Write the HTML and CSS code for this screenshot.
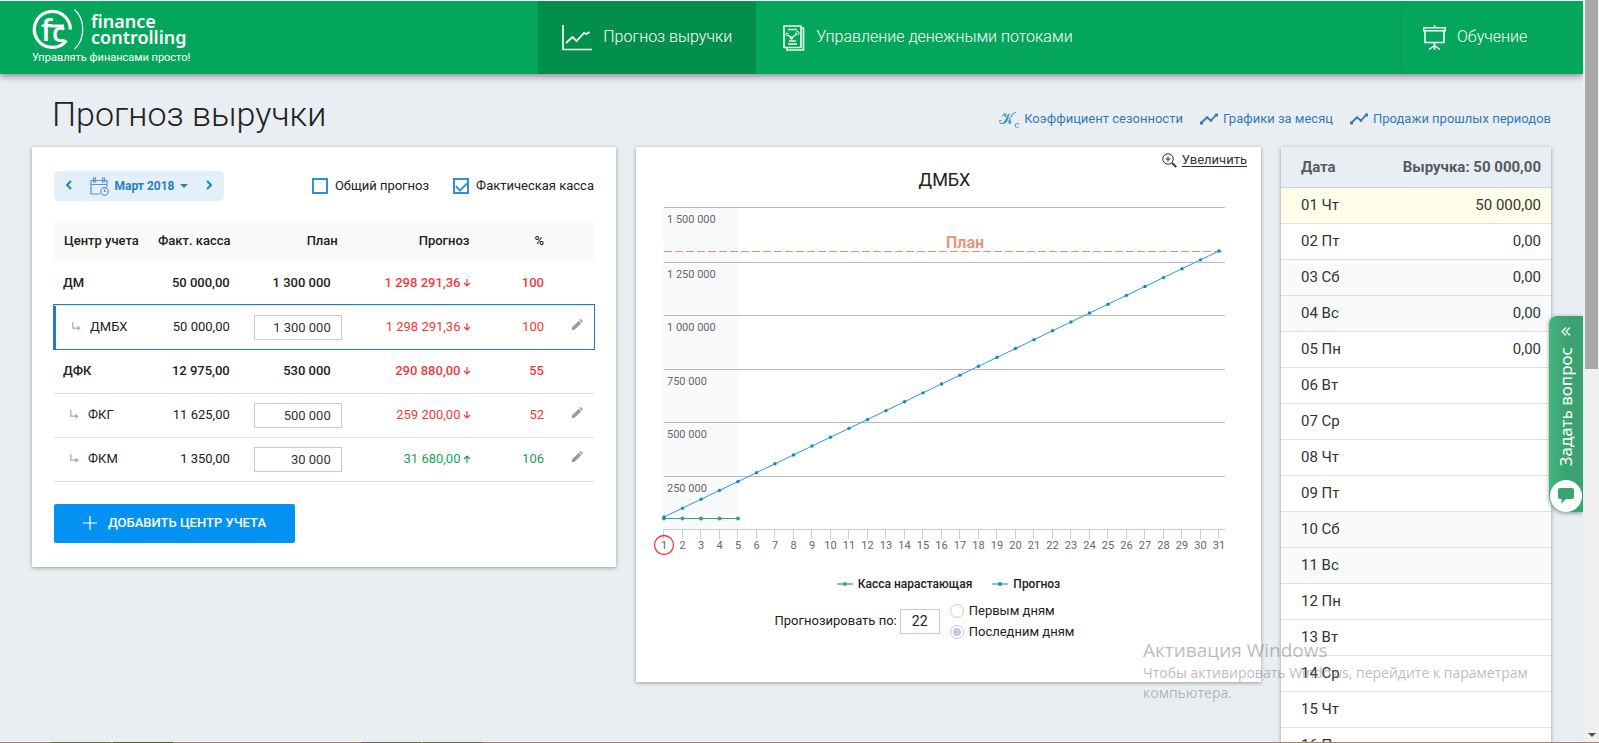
FILE: index.html
```html
<!DOCTYPE html>
<html lang="ru">
<head>
<meta charset="utf-8">
<title>Прогноз выручки</title>
<link rel="stylesheet" href="styles.css">
</head>
<body>
<svg class="defs" aria-hidden="true">
  <symbol id="i-trend" viewBox="0 0 18 12"><path d="M1.500 9.500 7 4.500l4 3L16 2" fill="none" stroke="currentColor" stroke-width="1.800"/><path d="M0 8.500h3v3H0zM5.800 3.500h2.400v2.400H5.800zM9.800 6.300h2.400v2.400H9.800zM15 .5h3v3h-3z" fill="currentColor"/></symbol>
  <symbol id="i-sub" viewBox="0 0 9 9"><path d="M.8 0v6.200H6" fill="none" stroke="currentColor" stroke-width="1.200"/><path d="M5.500 3.600 8.600 6.200 5.500 8.800z" fill="currentColor"/></symbol>
  <symbol id="i-down" viewBox="0 0 8 8"><path d="M4 0v7M1 4l3 3 3-3" fill="none" stroke="currentColor" stroke-width="1.200"/></symbol>
  <symbol id="i-up" viewBox="0 0 8 8"><path d="M4 8V1M1 4l3-3 3 3" fill="none" stroke="currentColor" stroke-width="1.200"/></symbol>
  <symbol id="i-edit" viewBox="0 0 11 11"><path d="M0 11V8.600L6.800 1.800 9.200 4.200 2.400 11zM7.500 1.100 8.600 0 11 2.400 9.900 3.500z" fill="currentColor"/></symbol>
</svg>
<div class="screen">
  <div class="page">
    <header class="topbar">
      <a class="brand" href="#">
        <span class="brand-row">
          <svg class="brand-mark" width="52" height="41" viewBox="0 0 52 41">
            <path d="M38.300 20.500A18 18 0 1 0 34.500 31.500" fill="none" stroke="#fff" stroke-width="3.200"/>
            <path d="M42.500.5c11 10 11 29.500 0 39.500" fill="none" stroke="#fff" stroke-width="1.200"/>
            <text class="mark-f" x="9" y="32">f</text>
            <text class="mark-c" x="20" y="33">c</text>
            <path d="M18 17h14" stroke="#fff" stroke-width="3"/>
          </svg>
          <span class="brand-name">finance<br>controlling</span>
        </span>
        <span class="brand-tag">Управлять финансами просто!</span>
      </a>
      <nav class="nav">
        <a class="nav-item active" href="#">
          <svg width="30" height="26" viewBox="0 0 30 26" fill="none" stroke="#fff"><path d="M1 0v24.500h29" stroke-width="1.600"/><path d="M4 18l6.500-6 4 4 7.500-8 2.500 1L27.500 7" stroke-width="1.800"/></svg>
          <span>Прогноз выручки</span>
        </a>
        <a class="nav-item" href="#">
          <svg class="ic-report" width="22" height="26" viewBox="0 0 22 26" fill="none" stroke="#e6f6ec"><path d="M1 1h17v21.500H1zM18 3h2.500v22H4v-2.500" stroke-width="1.700"/><path d="M5 4.500h9M6 16h7M5 19h9" stroke-width="1.600"/><path d="M5 10l3.500 3 5-4" stroke-width="1.500"/><circle cx="4" cy="9.500" r="1.300"/><circle cx="8.500" cy="13" r="1.300"/><circle cx="14.500" cy="8" r="1.600"/></svg>
          <span>Управление денежными потоками</span>
        </a>
      </nav>
      <a class="nav-item learn" href="#">
        <svg width="23" height="26" viewBox="0 0 23 26" fill="none" stroke="#fff" stroke-width="1.500"><path d="M.8 2.800h21.400v3H.8zM2 6v11.500h19V6M11.500 0v2.500M11.500 17.500V25M11.500 20.500 6 24.500M11.500 20.500l5.500 4"/></svg>
        <span>Обучение</span>
      </a>
    </header>

    <main class="content">
      <div class="heading">
        <h1>Прогноз выручки</h1>
        <div class="links">
          <a href="#"><span class="kc">𝒦<sub>c</sub></span>Коэффициент сезонности</a>
          <a href="#"><svg width="18" height="12"><use href="#i-trend"/></svg>Графики за месяц</a>
          <a href="#"><svg width="18" height="12"><use href="#i-trend"/></svg>Продажи прошлых периодов</a>
        </div>
      </div>

      <div class="columns">
        <section class="card centers">
          <div class="toolbar">
            <div class="month">
              <button class="step" aria-label="Предыдущий месяц"><svg width="6" height="10" viewBox="0 0 6 10"><path d="M5 1 1 5l4 4"/></svg></button>
              <button class="month-name">
                <svg width="19" height="19" viewBox="0 0 19 19" fill="none" stroke="#5e93cc" stroke-width="1.200"><path d="M10 17H1V3.500h16V10M1 7.500h16M3.500 1h2v4h-2zM12.500 1h2v4h-2z"/><circle cx="14.500" cy="14.500" r="3.800"/><path d="M14.500 12.500v2h1.500"/></svg>
                <span>Март 2018</span>
                <i class="caret"></i>
              </button>
              <button class="step" aria-label="Следующий месяц"><svg width="6" height="10" viewBox="0 0 6 10"><path d="m1 1 4 4-4 4"/></svg></button>
            </div>
            <div class="checks">
              <label><input type="checkbox">Общий прогноз</label>
              <label><input type="checkbox" checked>Фактическая касса</label>
            </div>
          </div>
          <table class="grid">
            <colgroup><col class="c-name"><col class="c-fact"><col class="c-plan"><col class="c-forecast"><col class="c-percent"><col class="c-edit"></colgroup>
            <thead>
              <tr><th>Центр учета</th><th>Факт. касса</th><th>План</th><th>Прогноз</th><th>%</th><th></th></tr>
            </thead>
            <tbody>
              <tr class="group"><td>ДМ</td><td>50 000,00</td><td><span class="plan-total">1 300 000</span></td><td class="bad">1 298 291,36<svg width="8" height="8"><use href="#i-down"/></svg></td><td class="bad">100</td><td></td></tr>
              <tr class="child selected"><td><svg width="9" height="9"><use href="#i-sub"/></svg>ДМБХ</td><td>50 000,00</td><td><input class="plan" type="text" value="1 300 000" aria-label="План ДМБХ"></td><td class="bad">1 298 291,36<svg width="8" height="8"><use href="#i-down"/></svg></td><td class="bad">100</td><td><button class="edit" aria-label="Изменить"><svg width="11" height="11"><use href="#i-edit"/></svg></button></td></tr>
              <tr class="group"><td>ДФК</td><td>12 975,00</td><td><span class="plan-total">530 000</span></td><td class="bad">290 880,00<svg width="8" height="8"><use href="#i-down"/></svg></td><td class="bad">55</td><td></td></tr>
              <tr class="child"><td><svg width="9" height="9"><use href="#i-sub"/></svg>ФКГ</td><td>11 625,00</td><td><input class="plan" type="text" value="500 000" aria-label="План ФКГ"></td><td class="bad">259 200,00<svg width="8" height="8"><use href="#i-down"/></svg></td><td class="bad">52</td><td><button class="edit" aria-label="Изменить"><svg width="11" height="11"><use href="#i-edit"/></svg></button></td></tr>
              <tr class="child"><td><svg width="9" height="9"><use href="#i-sub"/></svg>ФКМ</td><td>1 350,00</td><td><input class="plan" type="text" value="30 000" aria-label="План ФКМ"></td><td class="good">31 680,00<svg width="8" height="8"><use href="#i-up"/></svg></td><td class="good">106</td><td><button class="edit" aria-label="Изменить"><svg width="11" height="11"><use href="#i-edit"/></svg></button></td></tr>
            </tbody>
          </table>
          <button class="add"><svg width="14" height="14" viewBox="0 0 14 14"><path d="M7 0v14M0 7h14" stroke="#fff" stroke-width="1.200"/></svg>ДОБАВИТЬ ЦЕНТР УЧЕТА</button>
        </section>

        <section class="card chart-card">
          <div class="enlarge">
            <svg width="15" height="15" viewBox="0 0 15 15" fill="none" stroke="#333"><circle cx="6" cy="6" r="5.200"/><path d="M3.500 6h5M6 3.500v5"/><path d="m10 10 4.300 4" stroke-width="1.800"/></svg>
            <a href="#">Увеличить</a>
          </div>
          <h2>ДМБХ</h2>
          <svg id="chart" class="chart" viewBox="0 0 625 358" role="img" aria-label="Касса нарастающая и прогноз по дням"></svg>
          <div class="legend">
            <span><svg width="16" height="6"><path d="M0 3h16" stroke="#88c7ab" stroke-width="2"/><circle cx="8" cy="3" r="2" fill="#3ba272"/></svg>Касса нарастающая</span>
            <span><svg width="16" height="6"><path d="M0 3h16" stroke="#5ab3e2" stroke-width="1.500"/><circle cx="8" cy="3" r="2" fill="#0e87cc"/></svg>Прогноз</span>
          </div>
          <div class="basis">
            <label for="days">Прогнозировать по:</label>
            <input id="days" type="text" value="22">
            <div class="radios">
              <label><input type="radio" name="basis">Первым дням</label>
              <label><input type="radio" name="basis" checked>Последним дням</label>
            </div>
          </div>
        </section>

        <section class="card days-card">
          <table class="days">
            <thead><tr><th>Дата</th><th>Выручка: 50 000,00</th></tr></thead>
            <tbody>
              <tr class="now"><td>01 Чт</td><td>50 000,00</td></tr>
              <tr><td>02 Пт</td><td>0,00</td></tr>
              <tr class="off"><td>03 Сб</td><td>0,00</td></tr>
              <tr class="off"><td>04 Вс</td><td>0,00</td></tr>
              <tr><td>05 Пн</td><td>0,00</td></tr>
              <tr><td>06 Вт</td><td></td></tr>
              <tr><td>07 Ср</td><td></td></tr>
              <tr><td>08 Чт</td><td></td></tr>
              <tr><td>09 Пт</td><td></td></tr>
              <tr class="off"><td>10 Сб</td><td></td></tr>
              <tr class="off"><td>11 Вс</td><td></td></tr>
              <tr><td>12 Пн</td><td></td></tr>
              <tr><td>13 Вт</td><td></td></tr>
              <tr><td>14 Ср</td><td></td></tr>
              <tr><td>15 Чт</td><td></td></tr>
              <tr><td>16 Пт</td><td></td></tr>
            </tbody>
          </table>
        </section>
      </div>
    </main>

    <button class="ask">
      <span class="ask-text">Задать вопрос</span>
      <svg class="ask-arrows" width="10" height="9" viewBox="0 0 10 9" fill="none" stroke="#fff" stroke-width="1.200"><path d="M5 .5 1 4.500l4 4M9 .5 5 4.500l4 4"/></svg>
      <span class="ask-bubble"><svg width="16" height="16" viewBox="0 0 16 16"><path d="M2 0h12a2 2 0 0 1 2 2v7a2 2 0 0 1-2 2H8l-5 5 .8-5H2a2 2 0 0 1-2-2V2a2 2 0 0 1 2-2z" fill="#3ba272"/></svg></span>
    </button>
    <div class="activation"><strong>Активация Windows</strong><p>Чтобы активировать Windows, перейдите к параметрам компьютера.</p></div>
  </div>
  <div class="scrollbar"><div class="thumb"></div><i class="scroll-down"></i></div>
</div>
<div class="taskbar"><i></i><i class="dark"></i><i class="second"></i><i></i></div>
<script src="chart.js"></script>
</body>
</html>
```
FILE: styles.css
```css
* { box-sizing: border-box; }
body {
  margin: 0;
  height: 100vh;
  display: flex;
  flex-direction: column;
  overflow: hidden;
  background: #fff;
  color: #212121;
  font: 13px/18px Roboto, "Open Sans", sans-serif;
}
button, input { font: inherit; color: inherit; }
button { border: 0; background: none; padding: 0; cursor: pointer; }
svg { flex: none; }
.defs { position: absolute; width: 0; height: 0; }

.screen { flex: 1; min-height: 0; display: flex; padding-top: 1px; }
.page { flex: 1; min-width: 0; position: relative; overflow: hidden; background: #e9eef2; }

.topbar {
  height: 73px;
  display: flex;
  align-items: stretch;
  background: #03a65a;
  color: #fff;
  box-shadow: 0 1px 8px rgba(0, 0, 0, .55);
}
.topbar a { color: #fff; text-decoration: none; }
.brand { width: 34%; padding: 8px 0 0 32px; }
.brand-row { display: flex; gap: 7px; height: 42px; }
.mark-f, .mark-c { font-family: "Open Sans", sans-serif; font-weight: 600; fill: #fff; }
.mark-f { font-size: 30px; }
.mark-c { font-size: 27px; }
.brand-name { padding-top: 4px; font: 600 18px/16px "Noto Sans", "Open Sans", sans-serif; }
.brand-tag { display: block; font-size: 11px; line-height: 14px; }
.nav { display: flex; flex: 1; }
.nav-item { display: flex; align-items: center; gap: 11px; padding: 0 24px 2px; font-size: 16px; font-weight: 300; }
.nav-item svg { margin-top: 2px; }
.nav-item.active { background: #028f4c; }
.nav-item.learn { width: 183px; border-left: 1px solid #059c54; padding-left: 22px; }
.ic-report { margin-left: 3px; }

.content { padding: 20px 32px 0; }
.heading { display: flex; justify-content: space-between; padding-left: 20px; height: 53px; }
h1 { margin: 0; font-size: 34px; line-height: 40px; font-weight: 300; }
.links { display: flex; align-items: center; gap: 17px; height: 50px; }
.links a { display: flex; align-items: center; gap: 5px; color: #337ab7; text-decoration: none; }
.kc { font: 16px/18px "DejaVu Serif", "DejaVu Sans", serif; color: #1e88c7; }
.kc sub { font-size: 9px; line-height: 0; }

.columns { display: grid; grid-template-columns: 584fr 625fr 270fr; gap: 20px; align-items: start; }
.card { background: #fff; box-shadow: 0 1px 4px rgba(0, 0, 0, .35); }

.centers { padding: 24px 22px; }
.toolbar { display: flex; justify-content: space-between; align-items: center; height: 30px; }
.month { display: flex; justify-content: space-between; height: 30px; border-radius: 5px; background: #e3f0f9; color: #2980b9; }
.step { width: 30px; }
.step path { fill: none; stroke: #1e88c7; stroke-width: 2; }
.month-name { display: flex; align-items: center; gap: 5px; width: 110px; justify-content: center; font-size: 12px; font-weight: 700; }
.caret { border: 4px solid transparent; border-top-color: currentColor; border-bottom: 0; }
.checks { display: flex; gap: 24px; }
.checks label { display: flex; align-items: center; gap: 7px; }
.checks input {
  appearance: none;
  width: 16px;
  height: 16px;
  margin: 0;
  border: 2px solid #3490c9;
}
.checks input:checked::before {
  content: "";
  display: block;
  width: 9px;
  height: 5px;
  margin: 2px 1px;
  border: solid #3490c9;
  border-width: 0 0 2px 2px;
  transform: rotate(-45deg);
}

.grid { width: 100%; margin: 20px 0 22px; table-layout: fixed; border-collapse: collapse; }
.c-name { width: 17.4%; }
.c-fact { width: 17%; }
.c-plan { width: 20%; }
.c-forecast { width: 24.4%; }
.c-percent { width: 13.8%; }
.c-edit { width: 7.4%; }
.grid th { height: 40px; padding: 0 10px; background: #fafafa; font-weight: 500; text-align: right; white-space: nowrap; }
.grid td { height: 44px; padding: 0 10px; text-align: right; white-space: nowrap; border-bottom: 1px solid #e0e2e4; }
.grid th:first-child, .grid td:first-child { text-align: left; }
.grid th:first-child { padding-right: 0; }
.grid .group { font-weight: 500; }
.grid .group td:first-child { padding-left: 9px; }
.grid .child td:first-child { padding-left: 16px; }
.grid .child td:first-child svg { margin-right: 9px; color: #aaa; }
.grid .selected { outline: 1px solid #1e7fc0; }
.grid .selected td { border-color: #1e7fc0; }
.grid .selected td:first-child { padding-left: 18px; box-shadow: inset 2px 0 #1e7fc0; }
.grid .bad, .grid .good { color: #ef3a3a; }
.grid .good { color: #17a35c; }
.grid td:nth-child(4) { padding-right: 8px; }
.grid td:nth-child(4) svg { margin-left: 3px; }
.grid td:nth-child(3) { padding-right: 6px; }
.grid td:last-child { padding: 0 11px 2px 0; }
.plan-total { padding-right: 11px; }
.plan { width: 88px; height: 25px; padding: 0 10px; border: 1px solid #c5cbdb; text-align: right; color: #333; background: #fff; }
.edit { color: #999; }
.edit svg { display: block; }
.add {
  display: flex;
  align-items: center;
  gap: 11px;
  height: 39px;
  padding: 0 29px;
  border-radius: 2px;
  background: #0492f2;
  color: #fff;
  font-weight: 500;
}

.chart-card { padding-bottom: 40px; }
.enlarge { display: flex; justify-content: flex-end; align-items: center; gap: 5px; height: 21px; padding: 5px 14px 0 0; }
.enlarge a { color: #333; text-underline-offset: 2px; }
h2 { margin: 0 22px 8px 14px; font-size: 18px; line-height: 24px; font-weight: 400; text-align: center; }
.chart { display: block; width: 100%; }
.chart text { font-size: 11px; fill: #666; }
.chart .day { text-anchor: middle; }
.chart .plan-label { font-size: 16px; font-weight: 700; fill: #e9967a; text-anchor: middle; }
.grid-line { stroke: #b8b8b8; shape-rendering: crispEdges; }
.axis { stroke: #c5cde0; shape-rendering: crispEdges; }
.plan-line { stroke: #e98b72; stroke-dasharray: 8 3; shape-rendering: crispEdges; }
.past { fill: #f9fafc; }
.forecast { fill: none; stroke: #2b9bdb; }
.forecast-dot { fill: #0e87cc; }
.cash { stroke: #3ba272; }
.cash-dot { fill: #3ba272; }
.today { fill: none; stroke: #f23a3a; stroke-width: 1.3; }
.legend { display: flex; justify-content: center; gap: 20px; padding-top: 18px; font-size: 12px; line-height: 16px; font-weight: 500; }
.legend span { display: flex; align-items: center; gap: 5px; }
.basis { display: flex; justify-content: center; align-items: center; padding: 8px 48px 0 0; }
.basis > input { width: 40px; height: 25px; margin: 0 10px 0 3px; padding: 0; border: 1px solid #c5cbdb; font-size: 14px; text-align: center; }
.radios label { display: flex; align-items: center; gap: 5px; height: 21px; }
.radios input {
  appearance: none;
  width: 14px;
  height: 14px;
  margin: 0;
  border: 1px solid #c5cbdb;
  border-radius: 50%;
  background: #fff;
}
.radios input:checked { padding: 2px; background: #c5cbdb content-box; }

.days { width: 100%; border-collapse: collapse; font-size: 15px; color: #333; }
.days th { height: 40px; padding: 0 10px 0 20px; background: #e9eef2; color: #555b61; font-weight: 700; text-align: right; white-space: nowrap; border-bottom: 1px solid #ccd3e0; }
.days td { height: 36px; padding: 0 10px 0 20px; text-align: right; border-bottom: 1px solid #dedfe1; }
.days th:first-child, .days td:first-child { text-align: left; }
.days .now { background: #fffee9; }
.days .off { background: #f9fafc; }

.ask {
  position: absolute;
  top: 315px;
  right: 0;
  width: 34px;
  height: 196px;
  border-radius: 8px 0 0 16px;
  background: linear-gradient(90deg, #46b582, #3ba272 50%);
  box-shadow: 0 1px 4px rgba(0, 0, 0, .4);
  color: #fff;
  display: flex;
  flex-direction: column-reverse;
  align-items: center;
  justify-content: space-between;
}
.ask-text { order: 2; margin-bottom: 3px; writing-mode: vertical-rl; transform: rotate(180deg); font: 17px/20px "Noto Sans", "Open Sans", sans-serif; }
.ask-arrows { order: 3; margin-top: 11px; }
.ask-bubble { order: 1; width: 32px; height: 32px; border-radius: 50%; background: #fff; display: flex; align-items: center; justify-content: center; }

.activation {
  position: absolute;
  right: 28px;
  bottom: 39px;
  width: 412px;
  color: rgba(120, 120, 120, .5);
  font: 14px/20px "Open Sans", "Noto Sans", sans-serif;
  pointer-events: none;
}
.activation strong { display: block; font-size: 19px; line-height: 25px; font-weight: 400; }
.activation p { margin: 0; }

.scrollbar { width: 16px; margin-top: -1px; padding: 0 1px 5px 2px; background: #f0f0f0; display: flex; flex-direction: column; justify-content: space-between; align-items: center; }
.thumb { width: 100%; height: 50%; background: #a8a8a8; }
.scroll-down { border: 4px solid transparent; border-top-color: #505050; border-bottom: 0; }
.taskbar { height: 1px; display: flex; background: #a0895f; }
.taskbar i { width: 60px; height: 1px; margin-left: 51px; background: #746c50; }
.taskbar i + i { margin-left: 2px; background: #5c583e; }
.taskbar .second { margin-left: 188px; background: #746c50; }
.taskbar i:last-child { background: #746c50; }
```
FILE: chart.js
```js
const chart = document.getElementById('chart');

function draw(tag, attrs, text) {
  const node = document.createElementNS('http://www.w3.org/2000/svg', tag);
  for (const name in attrs) node.setAttribute(name, attrs[name]);
  if (text) node.textContent = text;
  chart.appendChild(node);
}

const left = 28, right = 589, base = 329, step = 18.5;
const x = day => left + (day - 1) * step;
const forecastY = day => 317 - (day - 1) * (317 - 51) / 30;

draw('rect', { class: 'past', x: left - 1, y: 7, width: 75, height: base - 7 });

const levels = [
  ['1 500 000', 7], ['1 250 000', 62], ['1 000 000', 115],
  ['750 000', 169], ['500 000', 222], ['250 000', 276]
];
for (const [label, y] of levels) {
  draw('line', { class: 'grid-line', x1: left, x2: right, y1: y + 0.5, y2: y + 0.5 });
  draw('text', { x: left + 3, y: y + 16 }, label);
}

draw('line', { class: 'axis', x1: left - 1, x2: right, y1: base + 0.5, y2: base + 0.5 });
for (let day = 1; day <= 31; day++) {
  const at = Math.floor(x(day) - 0.5) + 0.5;
  draw('line', { class: 'axis', x1: at, x2: at, y1: base, y2: base + 10 });
  draw('text', { class: 'day', x: x(day), y: base + 20 }, String(day));
}

draw('line', { class: 'plan-line', x1: left, x2: x(31) + 3, y1: 51.5, y2: 51.5 });
draw('text', { class: 'plan-label', x: 329, y: 48 }, 'План');

draw('line', { class: 'cash', x1: x(1), x2: x(5), y1: 318.5, y2: 318.5 });
for (let day = 1; day <= 5; day++) draw('circle', { class: 'cash-dot', cx: x(day), cy: 318.5, r: 2 });

draw('line', { class: 'forecast', x1: x(1), y1: forecastY(1), x2: x(31), y2: forecastY(31) });
for (let day = 1; day <= 31; day++) draw('circle', { class: 'forecast-dot', cx: x(day), cy: forecastY(day), r: 1.7 });

draw('circle', { class: 'today', cx: x(1), cy: 345, r: 9.5 });
```
